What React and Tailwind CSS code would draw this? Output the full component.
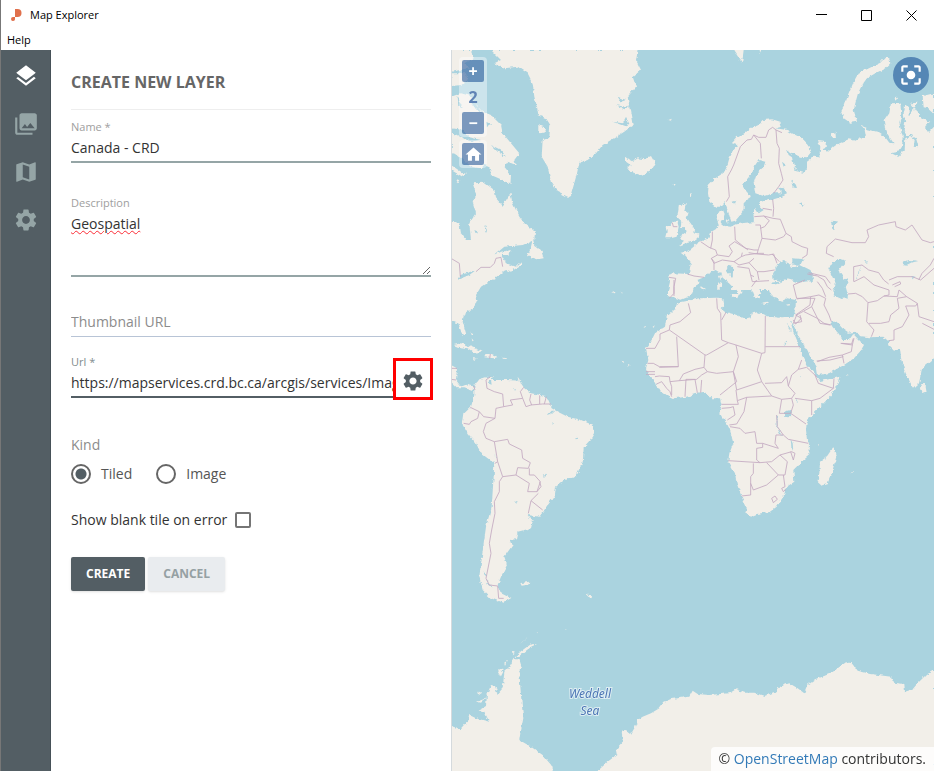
import React, { useState } from 'react';
import {
  MdCenterFocusStrong,
  MdHome,
  MdLayers,
  MdMap,
  MdPhotoLibrary,
  MdSettings,
} from 'react-icons/md';

const navItems = [
  { id: 'layers', label: 'Layers', icon: MdLayers },
  { id: 'images', label: 'Images', icon: MdPhotoLibrary },
  { id: 'maps', label: 'Maps', icon: MdMap },
  { id: 'settings', label: 'Settings', icon: MdSettings },
];

function TitleBar() {
  return (
    <header className="bg-white text-black">
      <div className="flex h-[30px] items-center">
        <svg className="ml-2.5 mr-2 h-3 w-[11px]" viewBox="0 0 11 12">
          <path d="M4 0h2.5a4 4 0 0 1 0 8H4z" fill="#e0704c" />
          <path d="M4 8v1.8A2 2 0 1 1 2 8z" fill="#e0704c" />
        </svg>
        <span className="flex-1 text-[11px]">Map Explorer</span>
        <button type="button" aria-label="Minimize" className="flex h-full w-[45px] items-center justify-center">
          <svg className="h-[11px] w-[11px]" viewBox="0 0 11 11" stroke="#000" fill="none">
            <path d="M0 4.5h11" />
          </svg>
        </button>
        <button type="button" aria-label="Maximize" className="flex h-full w-[45px] items-center justify-center">
          <svg className="h-[11px] w-[11px]" viewBox="0 0 11 11" stroke="#000" fill="none">
            <path d="M.5.5h10v10H.5z" />
          </svg>
        </button>
        <button type="button" aria-label="Close" className="flex h-full w-[45px] items-center justify-center">
          <svg className="h-[11px] w-[11px]" viewBox="0 0 11 11" stroke="#000" fill="none">
            <path d="M.5.5l10 10M10.5.5l-10 10" />
          </svg>
        </button>
      </div>
      <div className="flex h-5 items-center">
        <button type="button" className="px-1.5 text-[11px]">
          Help
        </button>
      </div>
    </header>
  );
}

function Sidebar() {
  const [active, setActive] = useState('layers');

  return (
    <nav className="flex w-[50px] shrink-0 flex-col border-r border-[#465158] bg-[#535e64] pt-0.5">
      {navItems.map(({ id, label, icon: Icon }) => (
        <button
          key={id}
          type="button"
          aria-label={label}
          onClick={() => setActive(id)}
          className={`flex h-12 items-center justify-center ${
            active === id ? 'text-white' : 'text-[#95a5a6]'
          }`}
        >
          <Icon size={26} />
        </button>
      ))}
    </nav>
  );
}

function LayerForm() {
  const [kind, setKind] = useState('tiled');

  return (
    <form className="flex w-[400px] shrink-0 flex-col bg-white px-5 text-sm text-[#333]">
      <h1 className="mt-5 text-base leading-6 font-bold text-[#666]">CREATE NEW LAYER</h1>
      <hr className="mt-[15px] border-[#eee]" />

      {/* Name */}
      <label htmlFor="name" className="mt-[9px] text-[11px] leading-4 text-[#9e9e9e]">
        Name *
      </label>
      <input
        id="name"
        defaultValue="Canada - CRD"
        className="h-7 border-b-2 border-[#95a5a6] pb-0.5 outline-none"
      />

      {/* Description */}
      <label htmlFor="description" className="mt-8 text-[11px] leading-4 text-[#9e9e9e]">
        Description
      </label>
      <textarea
        id="description"
        defaultValue="Geospatial"
        spellCheck={false}
        className="h-[66px] resize-y border-b-2 border-[#95a5a6] pt-[3px] leading-5 underline decoration-red-500 decoration-wavy decoration-1 outline-none"
      />

      {/* Thumbnail */}
      <input
        id="thumbnail"
        aria-label="Thumbnail URL"
        placeholder="Thumbnail URL"
        className="mt-8 h-7 border-b border-[#b8c4d6] pb-0.5 outline-none placeholder:text-[#8c8c8c]"
      />

      {/* Url */}
      <div className="relative mt-[17px] flex flex-col">
        <label htmlFor="url" className="text-[11px] leading-4 text-[#7f8c8d]">
          Url *
        </label>
        <input
          id="url"
          defaultValue="https://mapservices.crd.bc.ca/arcgis/services/ImageServer"
          className="h-7 border-b-2 border-[#535e64] pb-0.5 outline-none"
        />
        <button
          type="button"
          aria-label="Url settings"
          className="absolute -right-0.5 -bottom-0.5 flex h-[42px] w-10 items-center justify-center border-[3px] border-[#f00] bg-white pt-1 text-[#535e64]"
        >
          <MdSettings size={24} />
        </button>
      </div>

      {/* Kind */}
      <fieldset className="mt-[37px]">
        <legend className="leading-5 text-[#8c8c8c]">Kind</legend>
        <div className="mt-[9px] flex gap-6 leading-5 text-[#555]">
          <label className="flex items-center gap-2.5">
            <input
              type="radio"
              name="kind"
              checked={kind === 'tiled'}
              onChange={() => setKind('tiled')}
              className="size-5 appearance-none rounded-full border-2 border-[#666] checked:bg-[radial-gradient(circle,#535e64_5px,transparent_6px)]"
            />
            Tiled
          </label>
          <label className="flex items-center gap-2.5">
            <input
              type="radio"
              name="kind"
              checked={kind === 'image'}
              onChange={() => setKind('image')}
              className="size-5 appearance-none rounded-full border-2 border-[#666] checked:bg-[radial-gradient(circle,#535e64_5px,transparent_6px)]"
            />
            Image
          </label>
        </div>
      </fieldset>

      <label className="mt-[26px] flex items-center gap-2 leading-5">
        Show blank tile on error
        <input
          type="checkbox"
          className="size-4 appearance-none rounded-xs border-2 border-[#757575] checked:bg-[#535e64]"
        />
      </label>

      {/* Actions */}
      <div className="mt-[27px] flex gap-[3px] text-xs font-bold">
        <button type="submit" className="h-[34px] rounded-xs bg-[#535e64] px-[15px] text-white shadow">
          CREATE
        </button>
        <button type="button" className="h-[34px] rounded-xs bg-[#e9ecef] px-[15px] text-[#95a0a3] shadow">
          CANCEL
        </button>
      </div>
    </form>
  );
}

// Each tile is traced on its own grid, three units to a map pixel
const tiles = [
  {
    name: 'north-atlantic',
    transform: 'translate(-1 0) scale(.33333)',
    land: [
      'M120 0H560L555 30 570 60 545 80 555 110 530 140 545 225 520 245 480 270 455 285 435 310 410 330 385 338 378 370 360 435 350 440 320 425 300 395 290 350 272 320 275 270 295 260 298 225 285 205 262 195 258 170 250 140 245 100 230 70 200 50 160 55 130 40 150 30Z',
      'M525 320L545 335 560 325 580 328 600 318 612 340 600 360 570 376 540 365 528 350 543 348 525 335Z',
      'M262 225L280 232 285 245 270 250 262 240Z',
      'M0 0H60L65 25 40 40 55 55 0 65ZM0 70L45 70 50 90 30 105 3 108Z',
      'M0 140L30 130 60 138 70 160 95 185 120 195 150 225 155 250 180 280 205 310 190 330 195 345 170 335 160 350 180 375 178 405 155 390 120 375 115 350 100 345 90 355 60 350 40 335 20 315 3 310ZM0 345L30 365 45 372 35 380 0 360ZM15 388L28 390 22 400Z',
      'M65 400L100 398 130 420 135 445 155 467 178 430 185 460 205 500 220 520 252 545 250 570 215 585 160 590 130 615 150 605 180 600 175 615 150 615 165 640 195 650 215 632 210 645 180 665 165 660 130 685 105 690 80 720H0V515L25 518 30 550 45 570 60 570 55 520 75 490 65 455 75 430Z',
      'M245 568L250 585 270 600 278 625 260 628 228 618 240 590ZM652 210L662 206 660 212ZM668 400L674 402 670 408Z',
    ],
    water: [
      'M18 690L28 675 75 660 55 675ZM20 135L28 160 35 175 22 170ZM55 150L70 158 95 190 75 178ZM0 235L35 240 55 262 90 270 60 275 30 262 0 245ZM485 215L515 220 525 200 535 222 520 228ZM495 165L520 170 540 165 520 178ZM500 140L525 150 510 155ZM100 525L108 540 104 552ZM70 540L82 545 74 550ZM105 215L125 225 108 230ZM120 285L150 300 165 320 140 305Z',
    ],
    borders: 'M0 625L25 640 28 680M75 665L90 652 118 652 130 640 135 625 150 622 155 650',
  },
  {
    name: 'northern-europe',
    transform: 'translate(240 0) scale(.33333)',
    land: [
      'M70 470L52 455 48 430 50 405 70 385 95 368 105 350 112 325 125 300 138 285 120 280 135 262 160 248 175 235 200 225 215 210 240 208 265 215 270 230 250 235 285 240 300 250 330 265 350 285 358 305 345 322 325 320 300 310 285 300 290 315 300 322 305 345 320 365 335 368 345 355 345 335 365 320 382 322 385 290 378 270 395 272 402 285 395 300 405 308 425 290 440 280 470 268 490 272 510 262 522 262 518 240 508 225 525 238 555 245 580 262 592 278 605 280 585 250 578 210 592 190 597 160 625 158 628 200 622 220 632 260 630 290 620 305 598 310 620 320 638 300 640 265 655 258 668 270 665 290 680 292 672 265 655 255 640 255 635 240 640 215 635 190 640 165 650 170 650 200 660 185 670 175 685 200 700 210 715 215 700 225 700 240 712 245 726 230V720H120L130 545 155 530 185 522 187 470 200 490 215 480 200 465 205 455 245 448 270 440 280 435 265 430 245 430 215 438 190 430 185 400 195 370 215 350 220 335 200 330 190 345 180 370 158 395 153 410 165 430 180 440 165 450 155 460 155 480 145 495 130 512 118 515 110 490 103 470 100 455 85 470Z',
      'M580 22L592 25 595 40 580 55 550 70 525 85 510 105 498 130 490 160 485 180 495 215 475 218 455 205 447 185 458 165 465 145 475 120 485 95 500 68 520 60 545 48 565 38Z',
      'M418 250L430 248 432 262 420 262ZM692 138L726 130V190L710 175 695 172ZM125 0H155L150 38ZM200 0H208L202 12ZM604 145L615 143 612 152ZM184 495L192 492 186 505ZM655 160L680 158 665 175Z',
    ],
    water: [
      'M262 415L275 410 285 430 272 435ZM298 390L312 405 315 415 302 412ZM325 455L338 465 335 470 322 462ZM305 350L320 365 308 362ZM418 520L425 512 440 515 425 522 428 540 420 532ZM262 640L275 633 290 640 300 655 325 645 355 660 366 678 355 692 320 698 290 687 265 695 245 690 243 670 255 655ZM308 635L335 627 325 642 305 645ZM635 640L650 632 680 633 660 637 638 648ZM122 455L132 452 128 465ZM270 335L282 345 275 350Z',
    ],
    borders:
      'M103 455L112 440 107 380 118 360 125 345 145 290 165 270 178 268 185 255 200 262 222 262 230 240 242 232 252 240 270 248M185 255L205 280 208 325M252 240L255 280 262 295 260 340 268 370 273 390 260 410 245 430M242 448L245 475 243 500M212 475L240 480M187 500L215 498 243 505 265 508 282 550 275 560 250 570 210 565 205 525 190 525M215 498L232 512 218 530 205 535M282 550L298 560 300 575 330 590 347 595 345 615 330 625M128 530L130 570 155 590 168 600M210 565L200 595 195 612 170 608M403 610L405 590 430 567 480 578 520 578 530 560 525 540 560 525 610 515 612 530 640 540 660 525 690 570 715 578 726 575M403 610L425 620M485 695V650L510 645 530 660 560 668 575 690 590 702M726 625L715 645 690 670 680 690M350 668L400 680 415 700M195 612L230 615 245 612 255 640M240 612L262 635',
  },
  {
    name: 'western-europe',
    transform: 'translate(202 140) scale(.33333)',
    land: [
      'M300 97L400 60 480 100V320L440 325 425 330 400 325 385 332 365 325 350 315 345 300 340 285 350 278 335 280 320 278 300 283 315 300 325 310 312 312 318 325 300 320 292 300 285 290 275 278 262 262 245 245 235 228 225 225 218 235 222 248 235 262 250 275 272 290 262 290 265 305 255 315 245 300 225 280 205 265 198 248 185 240 165 250 150 262 130 270 140 278 120 290 115 310 100 322 80 330 68 325 42 318 42 300 48 275 42 255 60 250 105 252 110 220 95 200 80 188 95 185 110 178 125 165 145 152 165 145 172 125 185 118 195 105 188 85 190 65 207 60 212 72 208 85 200 98 212 108 230 110 245 103 275 98Z',
      'M75 45L95 42 92 60 104 68 98 85 110 100 120 115 118 128 133 130 130 148 115 155 95 160 75 167 90 152 78 148 85 135 95 128 92 112 80 110 82 95 70 85 72 65Z',
      'M55 95L70 95 74 110 68 140 50 145 33 145 38 125 35 110 50 105Z',
      'M230 312L255 312 250 325 232 318ZM192 278L202 275 200 298 193 300ZM195 258L201 256 200 272ZM320 340L345 338 342 343ZM140 294L150 290 156 294 146 298ZM215 90L225 88 222 102ZM108 8L112 14 108 20Z',
    ],
    water: [
      'M412 205L445 207 440 225 412 220ZM350 278L372 275 380 280 358 284ZM362 245L370 225 382 217 395 222 395 232 412 230 450 240 480 262 475 275 430 270 400 268 380 275 362 270Z',
    ],
    borders:
      'M45 262L65 265 60 290 60 318M100 252L120 258 150 262M140 155L165 172 185 180M175 125L175 150 170 175M185 180L190 195 172 205 180 215 180 240M190 195L225 200 235 185 225 168 242 155 275 175 300 180 312 180M172 205L180 220 205 210 240 215 262 200 265 188M262 200L275 195 312 190 330 190M240 215L255 225 285 218 300 205M250 230L285 235 290 255 300 260M285 218L310 245 330 245 362 240M290 255L295 275 345 272M310 245L315 270M55 98L58 110 70 110',
  },
  {
    name: 'middle-east',
    transform: 'translate(322 180) scale(.33333)',
    land: [
      'M58 285L75 320 95 350 110 380 128 410 132 435 165 430 210 405 240 385 260 362 270 345 250 325 238 312 225 330 205 330 195 312 175 290 172 275 188 275 205 295 225 308 245 305 255 318 290 322 328 320 345 335 342 345 360 362 378 358 382 390 395 430 410 460 420 473 435 460 443 420 450 410 480 385V100H130L118 155 80 157 55 145 30 152 0 157V205L30 202 66 207 64 240 58 262 52 275Z',
      'M445 458L455 468 458 485 445 490 441 475ZM216 433L224 435 219 438Z',
    ],
    water: [
      'M175 95L200 88 215 92 212 105 195 112 200 130 210 145 225 152 222 160 215 170 222 195 220 205 200 207 180 198 178 180 185 160 175 140 163 115Z',
      'M388 108L392 95 405 90 435 92 400 97ZM270 93L285 95 275 98ZM425 140L415 145 412 138ZM246 148L262 105 250 145Z',
    ],
    borders:
      'M100 132L130 138 150 150 160 170 172 180M130 155L145 175 155 200M68 207L110 200 135 195 155 205 150 225 165 255 172 275M110 200L108 225 65 255M90 245L130 265 150 280 172 285M58 270L65 282 82 265 65 255M222 192L245 190 265 200 282 218 278 275 300 300 292 320M282 218L310 212 330 198 345 195 345 180 300 165 270 140 240 155M330 198L370 200 375 180 398 200 370 205 375 235 350 255 345 275 320 280 285 280M345 150L370 140 415 140 440 150 480 115M355 165L378 155 380 162 362 170M398 200L430 220 425 228 395 228 405 255 385 290 360 300 360 330 345 332M430 220L435 260 480 275M445 280L480 298M130 395L165 382 205 375 210 400M205 375L232 365 235 345 200 340M235 345L240 325',
  },
  {
    name: 'africa',
    transform: 'translate(168 230) scale(.33333)',
    land: [
      'M172 68L205 62 240 55 290 53 310 55 312 75 305 85 320 97 350 105 380 118 392 115 395 100 415 97 440 108 475 113 500 110 522 112 513 130 520 155 535 190 548 230 560 255 580 275 590 292 600 303 640 295 658 290 655 305 635 345 600 380 575 405 560 430 558 450 562 485 570 490 568 525 540 550 520 570 523 605 500 620 490 650 470 680 450 695 410 702 390 710 376 700 380 685 365 650 350 610 345 580 325 545 328 520 340 490 330 450 318 425 298 400 305 375 300 355 275 355 258 338 225 342 200 350 160 355 140 345 112 325 105 305 90 290 78 265 85 240 78 205 95 180 105 160 135 140 140 110 165 88Z',
      'M642 498L650 525 645 545 635 580 622 612 605 617 592 605 598 580 600 545 620 530Z',
      'M70 138L78 140 72 143ZM98 140L105 136 100 144ZM592 492L596 494 592 497ZM694 576L700 578 695 580ZM498 74L512 71 504 77Z',
    ],
    water: [
      'M492 395L510 390 514 402 505 412 492 410ZM470 405L474 405 472 440 486 465 480 462 470 440ZM512 478L518 490 520 515 514 500ZM528 355L534 368 529 366ZM490 195L500 185 502 190ZM537 289L543 289 540 292ZM500 130L515 150 512 155Z',
    ],
    borders:
      'M205 70L212 98 180 125 150 135 148 150 255 225 260 225 325 188 348 195 425 220 435 218 436 108M148 150L120 162V178L105 205H78M170 170L175 260H118L100 250 83 250M290 55L292 85 302 100 305 180 325 188M318 97L305 120M436 200H540M425 220L412 270 425 305 350 330 340 275 355 230 348 195M255 225L252 262 225 268 190 282 178 302 150 305 148 290 118 288 105 290M252 262L262 275 290 280 340 275 350 305 325 325 300 345M175 260L118 262M78 275H105M78 283H105M110 312L125 305 140 325 150 335 155 350M150 305L155 320V345M195 350L198 298H225L232 338M178 302L230 298 245 285 262 275M242 338L245 300M425 305L455 348 380 352 352 362 348 330M455 348L485 358 515 355 525 340 505 318 500 290 485 308 435 310M505 318L515 285 535 268 560 262 590 290M535 268L545 240M585 285L595 310 640 325 600 355 575 362 525 355M640 325L642 295M575 362V405M515 355L520 375 512 400H478L485 358M512 400L558 432M305 373H355L352 362M305 385L330 383 340 380 345 405 322 420M380 352L372 395 350 432 328 435M330 440L360 445 375 460 405 455 410 490 428 490V502L410 505V540L420 548 325 542M428 490L475 505 465 490 468 465 490 465 505 478 565 490M470 405L472 440 490 465M420 548L455 545 480 525 515 515 525 520 520 540 512 515M440 548L475 585 495 585 502 545 480 525M400 550V580L392 590V645L365 648M392 610L400 630 440 615 475 585M490 585L495 620 485 625 490 635 498 628M455 655L465 648 472 658 460 668ZM590 243L630 240 670 230M555 0L520 15 530 55 585 55 575 80 530 105 520 130 545 125 540 105M575 80L600 130 630 135M665 190L695 192 700 175M148 55L162 40V0M395 20L410 0',
  },
  {
    name: 'americas',
    transform: 'translate(-1 230) scale(.33333)',
    land: [
      'M0 -20H150L120 0 90 20 75 45 80 65 65 85 38 105 35 125 45 160 35 168 22 130 0 125Z',
      'M8 195L30 190 60 200 95 215 70 218 50 205 20 200ZM105 222L122 222 142 230 130 235 100 232ZM62 234L78 236 70 239ZM155 233L168 234 166 237 155 236ZM58 155L68 160 64 164ZM62 175L68 182 64 184ZM200 290L208 302 202 302Z',
      'M0 255L18 265 15 300 30 320 50 312 70 325 62 332 40 325 20 325 0 305Z',
      'M70 318L85 298 110 290 125 292 122 300 170 300 205 302 220 325 240 340 285 348 302 385 320 395 350 410 390 420 425 435 432 460 420 480 398 505 395 550 375 590 340 600 315 620 312 645 280 690 265 710 230 705 245 725 240 745 200 755 195 778 175 780 185 795 160 830 168 855 150 890 140 915 150 940 180 955 155 968 120 955 95 930 85 890 90 850 97 800 105 740 122 680 128 590 130 550 90 520 75 490 50 460 35 435 40 400 60 380 70 345Z',
      'M208 910L235 905 230 914 212 917ZM405 943L418 946 422 955 412 950ZM480 32L498 38 490 40ZM508 38L516 42 510 44ZM512 245L520 246 515 250ZM528 252L536 255 530 260Z',
    ],
    water: [
      'M112 300L120 300 122 314 116 312ZM190 664L200 664 196 671ZM305 425L309 428 305 432ZM368 475L382 473 375 478ZM134 526L139 530 136 535ZM190 325L195 325 192 334ZM275 588L287 580 280 590ZM290 405L302 392 310 392 300 402ZM105 895L125 925 112 915ZM98 870L108 885 100 884Z',
    ],
    borders:
      'M118 290L105 300 108 325 130 335 155 342 158 380 135 385 132 415 98 410 85 395 58 382M158 380L185 375 178 360 215 355 225 380 240 375 275 372 300 372M215 355L208 335 218 322M240 342L236 360 242 375M266 346V372M286 350L280 372M85 395L80 415 60 425 55 433 38 430M132 415L105 430 97 455 105 475 130 485 140 545 132 550M130 485L170 478 175 492 212 510 215 535 238 548 232 565 200 563 195 585 155 590 140 545M195 585L235 610 230 635 258 635 268 605 250 585 235 585V565M258 635L270 620 266 605M240 662L262 640M240 662L275 690M240 662L232 700M155 590L145 605V635L130 665 132 700 122 750 115 790 120 820 110 870 105 895 115 915 140 918 143 955H158M0 265H18M0 298L15 300M118 222L116 236M68 318L72 330',
  },
  {
    name: 'antarctica',
    transform: 'translate(-1 570) scale(.33333)',
    land: [
      'M0 318L30 328 50 305 55 285 75 295 115 305 100 275 85 270 105 258 108 225 120 195 132 198 140 222 155 205 160 155 175 140 188 118 205 118 213 145 205 160 208 200 212 250 217 295 208 340 205 360 240 380 275 405 305 440V480H0Z',
      'M430 480L440 453 470 425 500 402 497 385 515 365 512 332 525 330 540 342 550 325 560 300 575 290 600 280 625 265 640 245 660 237 715 230 725 212 740 222 775 225 835 220 855 208 880 218 910 218 940 228 975 215 985 200 1015 190 1040 205 1060 220 1070 195 1095 178 1140 160 1160 145 1185 127 1205 130 1220 152 1260 162 1320 170 1330 188 1360 192 1362 215 1385 208 1400 190 1425 165 1449 150V480Z',
      'M188 112L205 98 222 85 240 73 258 72 240 80 225 92 205 108ZM185 95L192 98 183 106ZM145 148L158 150 150 166 140 162ZM78 245L105 235 90 248ZM82 215L92 218 84 225ZM205 72L232 52 215 65ZM160 128L168 122 162 135ZM255 38L262 37 258 40ZM338 24L348 29 342 28Z',
    ],
    water: [],
    borders: '',
  },
];

function WorldMap() {
  return (
    <svg
      className="absolute inset-0 size-full bg-[#aad3df]"
      viewBox="0 0 482 721"
      preserveAspectRatio="xMidYMid slice"
      role="img"
      aria-label="World map"
    >
      <defs>
        <filter id="coast" x="0" y="-10" width="492" height="741" filterUnits="userSpaceOnUse">
          <feTurbulence type="fractalNoise" baseFrequency="0.22" numOctaves="3" seed="4" result="noise" />
          <feDisplacementMap in="SourceGraphic" in2="noise" scale="4" xChannelSelector="R" yChannelSelector="G" />
        </filter>
      </defs>
      <g filter="url(#coast)">
        {tiles.map((tile) => (
          <g key={tile.name} transform={tile.transform} fill="#f2efe9">
            {tile.land.map((d) => (
              <path key={d} d={d} />
            ))}
          </g>
        ))}
        {tiles.map((tile) => (
          <g key={tile.name} transform={tile.transform} fill="#aad3df">
            {tile.water.map((d) => (
              <path key={d} d={d} />
            ))}
          </g>
        ))}
      </g>
      {tiles.map((tile) => (
        <path
          key={tile.name}
          transform={tile.transform}
          d={tile.borders}
          fill="none"
          stroke="#c4aac2"
          strokeWidth="2.6"
          strokeLinejoin="round"
        />
      ))}
      <g
        className="font-['Noto_Sans','Open_Sans',sans-serif] text-[12px] italic"
        fill="#4d76b5"
        stroke="#fff"
        strokeOpacity="0.6"
        strokeWidth="2"
        paintOrder="stroke"
        textAnchor="middle"
      >
        <text x="138" y="648">Weddell</text>
        <text x="138" y="665">Sea</text>
      </g>
    </svg>
  );
}

function MapPanel() {
  const [zoom, setZoom] = useState(2);

  return (
    <main className="relative min-w-0 flex-1 overflow-hidden border-l border-[#d5dadd]">
      <WorldMap />

      {/* Zoom and home controls */}
      <div className="absolute top-[7px] left-[7px] flex flex-col gap-[3px] font-bold">
        <div className="flex flex-col items-center rounded bg-white/40 p-[3px]">
          <button
            type="button"
            aria-label="Zoom in"
            onClick={() => setZoom(zoom + 1)}
            className="flex size-[22px] items-center justify-center rounded-xs bg-[#003c88]/50 text-base text-white"
          >
            +
          </button>
          <span className="h-[30px] text-base leading-[30px] text-[#5f83b5]">{zoom}</span>
          <button
            type="button"
            aria-label="Zoom out"
            onClick={() => setZoom(zoom - 1)}
            className="flex size-[22px] items-center justify-center rounded-xs bg-[#003c88]/50 text-base text-white"
          >
            −
          </button>
        </div>
        <div className="rounded bg-white/40 p-[3px]">
          <button
            type="button"
            aria-label="Home"
            className="flex size-[22px] items-center justify-center rounded-xs bg-[#003c88]/50 text-white"
          >
            <MdHome size={19} />
          </button>
        </div>
      </div>

      <button
        type="button"
        aria-label="Center map"
        className="absolute top-[7px] right-[5px] flex size-9 items-center justify-center rounded-full bg-[#5587b5] text-white"
      >
        <MdCenterFocusStrong size={26} />
      </button>

      <p className="absolute right-0 bottom-0 rounded-tl bg-white/80 px-2 text-sm leading-6 text-[#333]">
        ©{' '}
        <a href="https://www.openstreetmap.org/copyright" className="text-[#337ab7]">
          OpenStreetMap
        </a>{' '}
        contributors.
      </p>
    </main>
  );
}

function App() {
  return (
    <div className="flex min-h-screen flex-col border-l border-[#777] bg-white font-['Open_Sans','Noto_Sans',sans-serif]">
      <TitleBar />
      <div className="flex flex-1">
        <Sidebar />
        <LayerForm />
        <MapPanel />
      </div>
    </div>
  );
}

export default App;
